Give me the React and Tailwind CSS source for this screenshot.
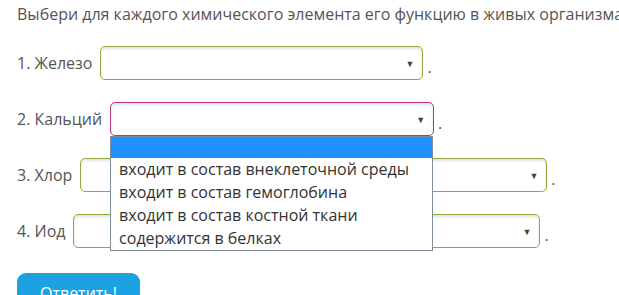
import React from 'react'

const rows = [
  { label: '1. Железо', width: 'w-[323px]', border: 'border-[#93a83f]' },
  { label: '2. Кальций', width: 'w-[324px]', border: 'border-[#b3367f]', open: true },
  { label: '3. Хлор', width: 'w-[467px]', border: 'border-[#93a83f]' },
  { label: '4. Иод', width: 'w-[467px]', border: 'border-[#93a83f]' },
]

const options = [
  'входит в состав внеклеточной среды',
  'входит в состав гемоглобина',
  'входит в состав костной ткани',
  'содержится в белках',
]

function Select({ width, border, open }) {
  return (
    <div className="relative">
      <div
        className={`${width} h-[34px] rounded-[5px] border ${border} bg-white shadow-[inset_0_2px_3px_rgba(0,0,0,0.12)] flex items-center justify-end pr-[8px]`}
      >
        <span className="text-[9px] text-[#444] leading-none">▼</span>
      </div>
      {open && (
        <div className="absolute left-0 top-[34px] z-10 w-[323px] border border-[#7d8d9b] bg-white">
          <div className="h-[21px] bg-[#1e90ff]" />
          {options.map((o) => (
            <div key={o} className="px-[8px] h-[23px] leading-[23px] text-[16px] text-[#333]">
              {o}
            </div>
          ))}
        </div>
      )}
    </div>
  )
}

export default function App() {
  return (
    <div className="w-[619px] h-[295px] overflow-hidden bg-white px-[17px] pt-[3px] font-['Open_Sans',sans-serif] text-[16px] text-[#555]">
      <p className="whitespace-nowrap leading-[22px]">
        Выбери для каждого химического элемента его функцию в живых организмах.
      </p>

      <div className="mt-[21px] flex flex-col gap-[22px]">
        {rows.map((r) => (
          <div key={r.label} className="flex items-center gap-[8px]">
            <span className="whitespace-nowrap">{r.label}</span>
            <Select width={r.width} border={r.border} open={r.open} />
            <span className="-ml-[4px] mt-[8px] leading-none">.</span>
          </div>
        ))}
      </div>

      <button className="mt-[25px] w-[123px] h-[42px] rounded-[9px] bg-[#1ca1e3] text-white text-[16px] leading-[22px] pb-[2px]">
        Ответить!
      </button>
    </div>
  )
}
